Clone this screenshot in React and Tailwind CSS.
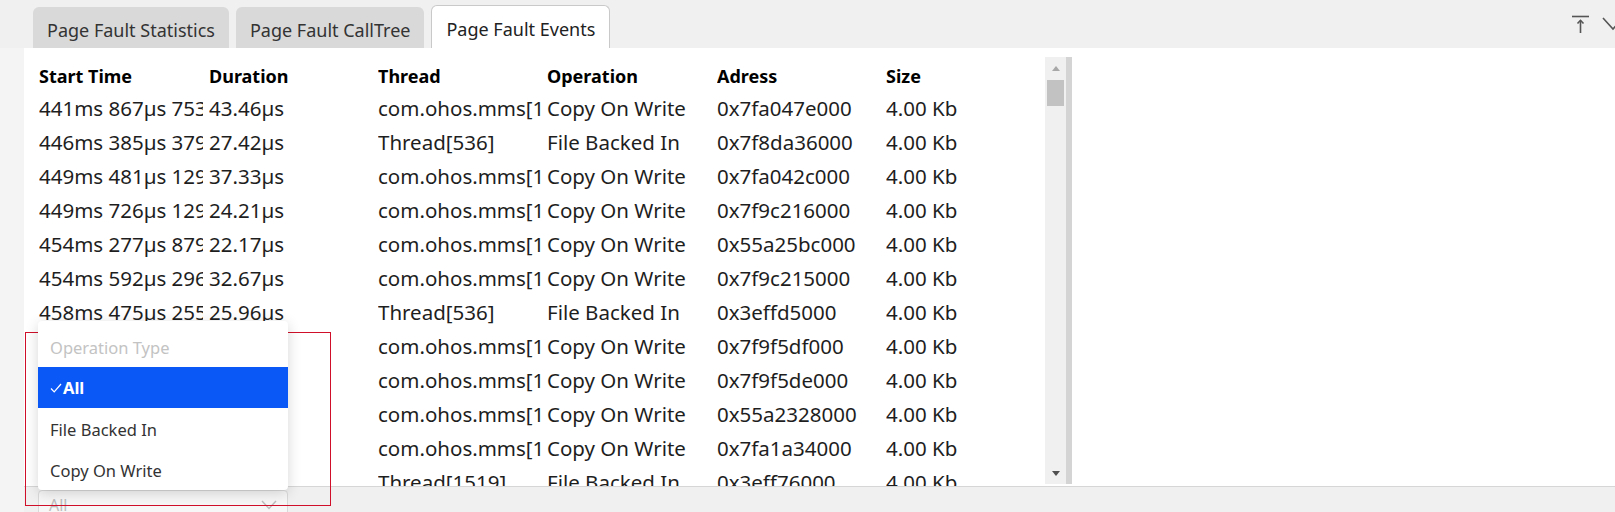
import React from 'react';

const rows = [
  ['441ms 867µs 753ns', '43.46µs', 'com.ohos.mms[1486]', 'Copy On Write', '0x7fa047e000', '4.00 Kb'],
  ['446ms 385µs 379ns', '27.42µs', 'Thread[536]', 'File Backed In', '0x7f8da36000', '4.00 Kb'],
  ['449ms 481µs 129ns', '37.33µs', 'com.ohos.mms[1486]', 'Copy On Write', '0x7fa042c000', '4.00 Kb'],
  ['449ms 726µs 129ns', '24.21µs', 'com.ohos.mms[1486]', 'Copy On Write', '0x7f9c216000', '4.00 Kb'],
  ['454ms 277µs 879ns', '22.17µs', 'com.ohos.mms[1486]', 'Copy On Write', '0x55a25bc000', '4.00 Kb'],
  ['454ms 592µs 296ns', '32.67µs', 'com.ohos.mms[1486]', 'Copy On Write', '0x7f9c215000', '4.00 Kb'],
  ['458ms 475µs 255ns', '25.96µs', 'Thread[536]', 'File Backed In', '0x3effd5000', '4.00 Kb'],
  ['461ms 120µs 458ns', '21.04µs', 'com.ohos.mms[1486]', 'Copy On Write', '0x7f9f5df000', '4.00 Kb'],
  ['463ms 904µs 211ns', '19.87µs', 'com.ohos.mms[1486]', 'Copy On Write', '0x7f9f5de000', '4.00 Kb'],
  ['466ms 318µs 760ns', '23.52µs', 'com.ohos.mms[1486]', 'Copy On Write', '0x55a2328000', '4.00 Kb'],
  ['469ms 047µs 892ns', '28.13µs', 'com.ohos.mms[1486]', 'Copy On Write', '0x7fa1a34000', '4.00 Kb'],
  ['472ms 611µs 304ns', '30.75µs', 'Thread[1519]', 'File Backed In', '0x3eff76000', '4.00 Kb'],
];

const headers = ['Start Time', 'Duration', 'Thread', 'Operation', 'Adress', 'Size'];
const cols = 'grid grid-cols-[170px_169px_169px_170px_169px_1fr]';

const Tab = ({ label, active }) => (
  <div
    className={
      active
        ? 'h-[43px] px-[14px] pt-[4px] flex items-center rounded-t-[6px] border border-b-0 border-[#c9c9c9] bg-white text-[18px] text-[#222]'
        : 'h-[41px] px-[14px] pt-[6px] flex items-center rounded-t-[6px] bg-[#d9d9d9] text-[18px] text-[#333]'
    }
  >
    {label}
  </div>
);

export default function App() {
  return (
    <div
      className="relative w-[1615px] h-[512px] overflow-hidden bg-[#f2f2f2] flex flex-col"
      style={{ fontFamily: '"Noto Sans", "Open Sans", sans-serif' }}
    >
      {/* tab bar */}
      <div className="h-[48px] shrink-0 flex items-end pl-[33px] bg-[#f0f0f0] overflow-hidden">
        <div className="flex items-end gap-[7px]">
          <Tab label="Page Fault Statistics" />
          <Tab label="Page Fault CallTree" />
          <Tab label="Page Fault Events" active />
        </div>
        <div className="ml-auto mr-[-10px] self-start mt-[13px] flex items-center gap-[10px] text-[#555]">
          <svg width="20" height="22" viewBox="0 0 20 22" fill="none" stroke="currentColor" strokeWidth="1.6">
            <path d="M1 3.5h17" />
            <path d="M9.5 20V7.5" />
            <path d="M6.5 10.5l3-3.2 3 3.2" />
          </svg>
          <svg width="24" height="18" viewBox="0 0 24 18" fill="none" stroke="currentColor" strokeWidth="1.6">
            <path d="M2 3l10 11 10-11" />
          </svg>
        </div>
      </div>

      {/* body */}
      <div className="flex flex-1 min-h-0">
        <div className="w-[24px] shrink-0 bg-[#f4f4f4]" />
        <div className="flex-1 flex flex-col bg-white min-w-0">
          <div className="flex flex-1 min-h-0">
            <div className="w-[1021px] pl-[15px] pt-[13px] overflow-hidden">
              <div className={`${cols} h-[30px] items-center text-[18px] font-bold text-black`}>
                {headers.map((h) => (
                  <div key={h} className="whitespace-nowrap overflow-hidden mr-[3px]">{h}</div>
                ))}
              </div>
              {rows.map((r, i) => (
                <div key={i} className={`${cols} h-[34px] items-center text-[20.5px] text-[#1e1e1e]`}>
                  {r.map((c, j) => (
                    <div key={j} className="whitespace-nowrap overflow-hidden mr-[6px]">{c}</div>
                  ))}
                </div>
              ))}
            </div>

            {/* scrollbar */}
            <div className="flex pt-[9px] pb-[2px]">
              <div className="w-[21px] bg-[#f0f0f0] flex flex-col items-center">
                <div className="h-[23px] flex items-center justify-center">
                  <div className="w-0 h-0 border-x-[4px] border-x-transparent border-b-[5px] border-b-[#a8a8a8]" />
                </div>
                <div className="w-[17px] h-[26px] bg-[#c2c2c2]" />
                <div className="flex-1" />
                <div className="h-[22px] flex items-center justify-center">
                  <div className="w-0 h-0 border-x-[4px] border-x-transparent border-t-[5px] border-t-[#505050]" />
                </div>
              </div>
              <div className="w-[6px] bg-[#d4d4d4]" />
            </div>
            <div className="flex-1" />
          </div>

          {/* bottom bar */}
          <div className="h-[26px] shrink-0 border-t border-[#d6d6d6] bg-[#f0f0f0] pl-[14px] pt-[3px]">
            <div className="w-[250px] h-[30px] border border-[#d9d9d9] rounded-[4px] bg-[#f7f7f7] flex items-center justify-between px-[10px] text-[16px] text-[#bdbdbd]">
              <span>All</span>
              <svg width="16" height="10" viewBox="0 0 16 10" fill="none" stroke="#bdbdbd" strokeWidth="1.4">
                <path d="M1 1l7 7.5L15 1" />
              </svg>
            </div>
          </div>
        </div>
      </div>

      {/* annotation frame */}
      <div className="absolute left-[25px] top-[332px] w-[306px] h-[174px] border border-[#d0102a]" />

      {/* dropdown popup */}
      <div className="absolute left-[38px] top-[321px] w-[250px] bg-white rounded-[4px] shadow-[0_3px_14px_rgba(0,0,0,0.16)] text-[16.5px]">
        <div className="h-[46px] px-[12px] pt-[15px] text-[#c3c3c3]">Operation Type</div>
        <div className="h-[41px] px-[12px] pt-[1px] flex items-center bg-[#0a59f7] text-white">
          <svg width="12" height="10" viewBox="0 0 12 10" fill="none" stroke="white" strokeWidth="1.2" className="mr-[1px]">
            <path d="M1 5.5l3.2 3.3L11 1" />
          </svg>
          <span className="font-bold">All</span>
        </div>
        <div className="h-[41px] px-[12px] pt-[3px] flex items-center text-[#333]">File Backed In</div>
        <div className="h-[41px] px-[12px] pt-[3px] flex items-center text-[#333]">Copy On Write</div>
      </div>
    </div>
  );
}
